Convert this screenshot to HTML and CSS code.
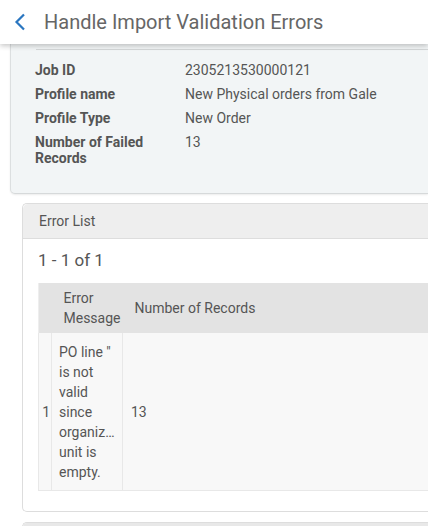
FILE: index.html
```html
<!DOCTYPE html>
<html>
<head>
<meta charset="utf-8">
<link rel="stylesheet" href="styles.css">
</head>
<body>
<header class="topbar">
  <svg class="back" width="14" height="18" viewBox="0 0 14 18"><path d="M11 1.5 L3.5 9 L11 16.5" fill="none" stroke="#2a76c0" stroke-width="2.2"/></svg>
  <h1 class="title">Handle Import Validation Errors</h1>
</header>
<main class="content">
  <section class="summary">
    <div class="divider"></div>
    <dl class="details">
      <dt>Job ID</dt><dd>2305213530000121</dd>
      <dt>Profile name</dt><dd>New Physical orders from Gale</dd>
      <dt>Profile Type</dt><dd>New Order</dd>
      <dt>Number of Failed Records</dt><dd>13</dd>
    </dl>
  </section>
  <section class="card">
    <div class="card-head">Error List</div>
    <div class="card-body">
      <div class="count">1 - 1 of 1</div>
      <table class="grid">
        <colgroup><col class="c1"><col class="c2"><col class="c3"></colgroup>
        <thead>
          <tr><th></th><th>Error Message</th><th>Number of Records</th></tr>
        </thead>
        <tbody>
          <tr><td class="num">1</td><td class="msg">PO line "<br>is not<br>valid<br>since<br>organiz…<br>unit is<br>empty.</td><td class="recs">13</td></tr>
        </tbody>
      </table>
    </div>
  </section>
  <section class="card next"><div class="card-head"></div></section>
</main>
</body>
</html>
```
FILE: styles.css
```css
html, body { margin: 0; padding: 0; }
body {
  font-family: Roboto, "Liberation Sans", sans-serif;
  color: #555;
  background: #fff;
  overflow: hidden;
  height: 526px;
}
.topbar {
  height: 44px;
  display: flex;
  align-items: center;
  background: #fff;
  box-shadow: 0 2px 5px rgba(0,0,0,0.22);
  position: relative;
  z-index: 2;
}
.back { margin-left: 13px; flex: none; }
.title {
  margin: 0 0 0 17px;
  font-size: 20px;
  font-weight: 400;
  color: #666;
}
.summary {
  margin: 0 0 0 10px;
  padding: 5px 0 27px 25px;
  background: #f2f5f6;
  border-left: 1px solid #dcdfe0;
  border-bottom: 1px solid #d6d9da;
  border-radius: 0 0 0 5px;
  box-shadow: 0 1px 2px rgba(0,0,0,0.08);
}
.divider { border-top: 1px solid #d4d7d8; }
.details {
  margin: 12px 0 0 -1px;
  display: grid;
  grid-template-columns: 150px 1fr;
  row-gap: 8px;
  font-size: 14px;
  line-height: 16px;
}
.details dt { font-weight: 700; color: #555; padding-right: 20px; }
.details dd { margin: 0; color: #555; }
.card {
  margin: 9px 0 0 22px;
  border: 1px solid #ddd;
  border-right: none;
  border-radius: 5px 0 0 5px;
  background: #fff;
}
.card-head {
  height: 34px;
  background: #eee;
  border-bottom: 1px solid #ddd;
  border-radius: 5px 0 0 0;
  padding-left: 16px;
  font-size: 14px;
  line-height: 34px;
  color: #555;
}
.card-body { padding: 9px 0 20px 15px; }
.count { font-size: 17px; line-height: 24px; color: #555; margin-bottom: 11px; }
.grid {
  border-collapse: collapse;
  table-layout: fixed;
  width: 100%;
  font-size: 14px;
  line-height: 20px;
  color: #555;
}
.c1 { width: 13px; }
.c2 { width: 71px; }
.grid th {
  background: #e3e3e3;
  font-weight: 400;
  text-align: left;
  height: 40px;
  padding: 5px 4px 5px 12px;
  color: #555;
}
.grid th:first-child { padding: 0; border-left: 1px solid #eee; }
.grid td {
  background: #f8f8f8;
  padding: 9px 6px 8px 7px;
  border: 1px solid #e8e8e8;
  border-top: none;
  vertical-align: middle;
}
.grid td:last-child { border-right: none; }
.grid td.num { padding: 0 1px 0 0; text-align: right; }
.grid td.recs { padding-left: 8px; }
.next { margin-top: 10px; height: 4px; border-bottom: none; border-radius: 5px 0 0 0; }
.next .card-head { height: 4px; background: #e8e8e8; border-bottom: none; }
```
